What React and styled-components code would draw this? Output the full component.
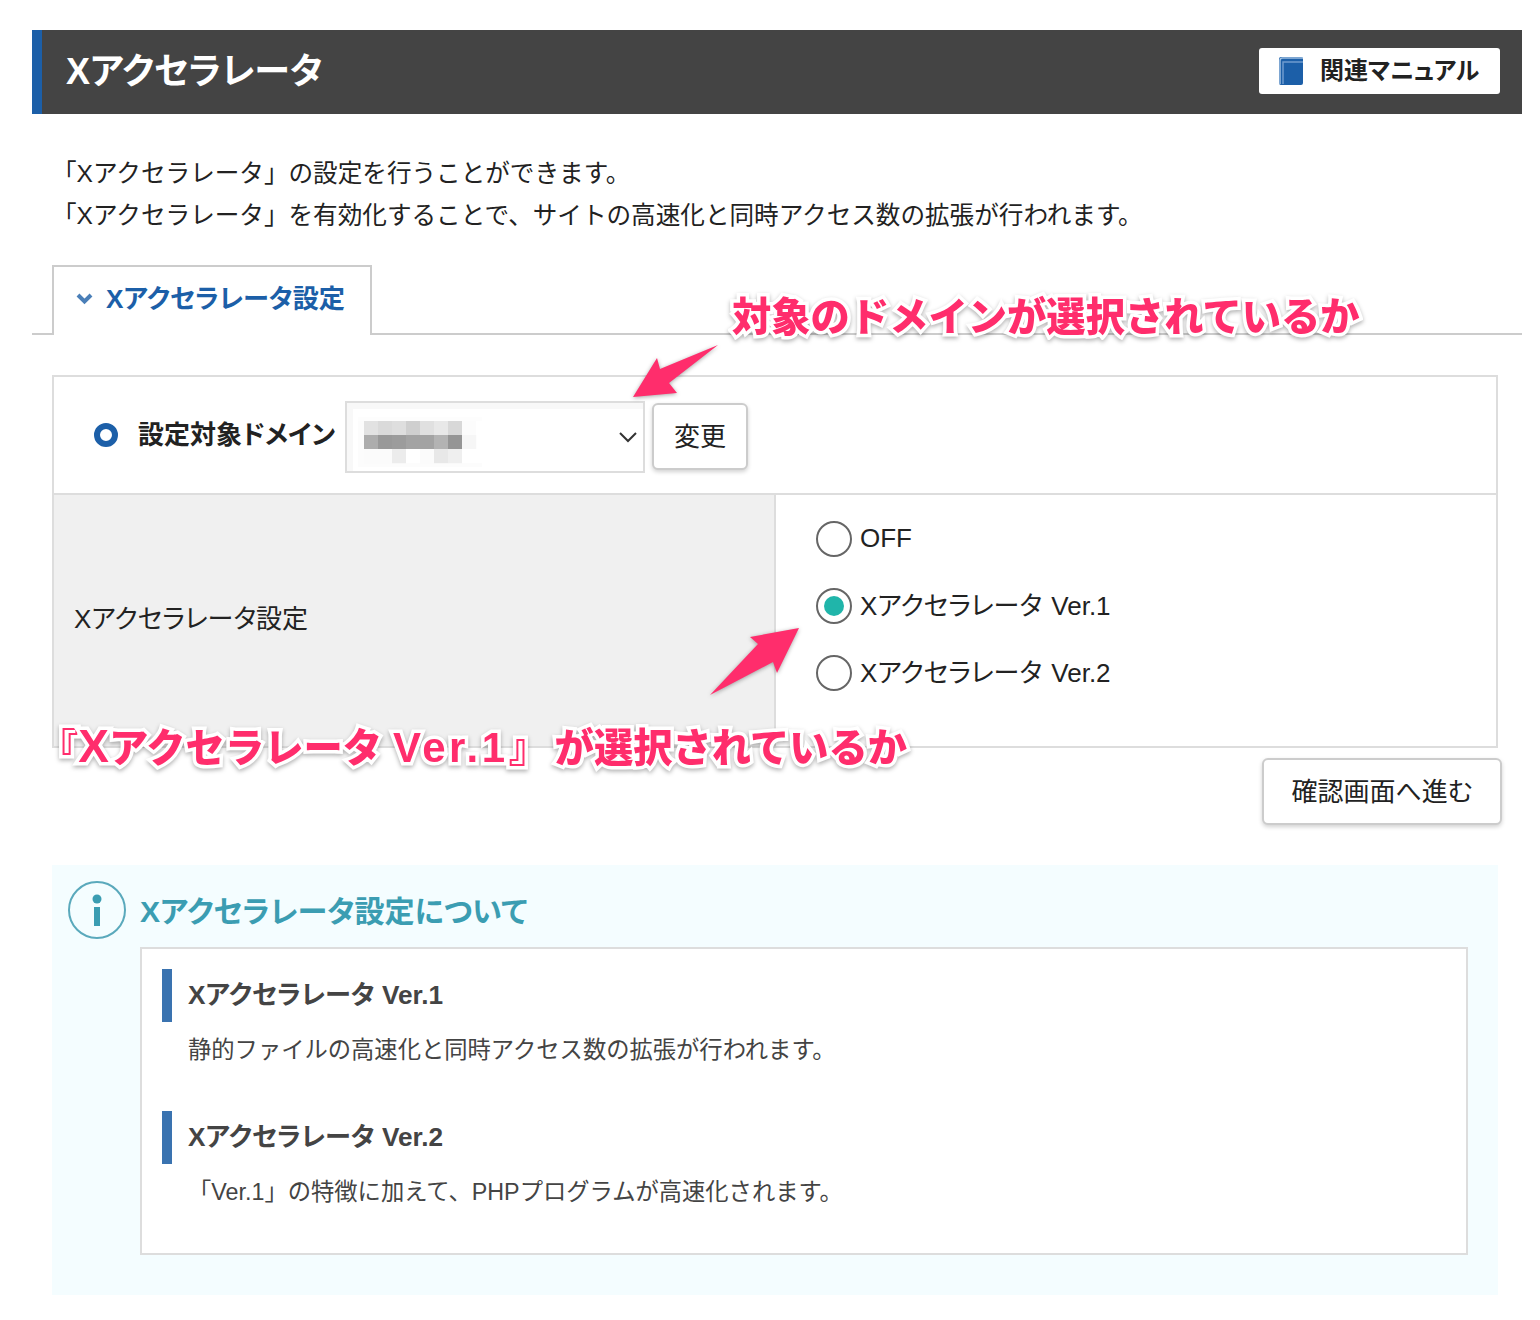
import React from "react";
import styled, { createGlobalStyle } from "styled-components";

const Global = createGlobalStyle`
  html, body { margin: 0; padding: 0; background: #fff; }
  body { font-family: "Liberation Sans", "Noto Sans CJK JP", sans-serif; color: #222; }
  * { box-sizing: border-box; }
`;

const Page = styled.div`
  position: relative;
  width: 1540px;
  height: 1320px;
  padding: 30px 18px 0 32px;
  overflow: hidden;
  font-feature-settings: "palt";
`;
const Header = styled.header`
  height: 84px;
  background: #444;
  border-left: 10px solid #1c5fa8;
  padding: 0 22px 0 24px;
  display: flex;
  align-items: center;
  justify-content: space-between;
`;
const Title = styled.h1`
  margin: 0 0 8px;
  font-size: 36px;
  font-weight: 700;
  color: #fff;
`;
const ManualButton = styled.a`
  width: 241px;
  height: 46px;
  margin-bottom: 2px;
  background: #fff;
  border-radius: 3px;
  display: flex;
  align-items: center;
  padding: 0 0 5px 20px;
  gap: 17px;
  font-size: 24px;
  font-weight: 700;
  color: #222;
  svg { margin-top: 5px; }
`;
const Intro = styled.p`
  margin: 39px 0 0;
  padding-left: 20px;
  font-size: 24.6px;
  line-height: 42px;
  color: #222;
  font-feature-settings: normal;
`;
const TabBar = styled.div`
  margin-top: 28px;
  height: 70px;
  border-bottom: 2px solid #ccc;
  padding-left: 20px;
`;
const Tab = styled.div`
  width: 320px;
  height: 70px;
  background: #fff;
  border: 2px solid #ccc;
  border-bottom: none;
  display: flex;
  align-items: center;
  padding: 0 0 8px 22px;
  gap: 13px;
  font-size: 26.2px;
  font-weight: 700;
  color: #1c5fa8;
  svg { margin-top: 3px; }
`;
const Content = styled.div`
  padding: 0 24px 0 20px;
`;
const Table = styled.section`
  margin-top: 40px;
  height: 373px;
  border: 2px solid #ddd;
  display: grid;
  grid-template-rows: 118px 1fr;
`;
const DomainRow = styled.div`
  border-bottom: 2px solid #ddd;
  display: flex;
  align-items: center;
  padding-left: 40px;
`;
const Ring = styled.span`
  width: 24px;
  height: 24px;
  border-radius: 50%;
  border: 6px solid #1c5fa8;
  margin: 0 20px 0 0;
`;
const DomainLabel = styled.strong`
  font-size: 26px;
  font-weight: 700;
  width: 207px;
  padding-bottom: 5px;
  color: #222;
`;
const DomainSelect = styled.div`
  width: 300px;
  height: 72px;
  border: 2px solid #ddd;
  box-shadow: inset 6px 6px 0 #f8f8f8;
  padding: 0 5px 0 11px;
  margin-top: 3px;
  display: flex;
  align-items: center;
  justify-content: space-between;
`;
const ActionButton = styled.button`
  height: ${(p) => p.$h}px;
  width: ${(p) => p.$w}px;
  background: #fff;
  border: 2px solid #ccc;
  border-radius: 6px;
  box-shadow: 0 2px 4px rgba(0, 0, 0, 0.18);
  font-family: inherit;
  font-feature-settings: "palt";
  font-size: 26px;
  color: #222;
  padding: 0 0 4px;
`;
const ChangeSlot = styled.div`
  margin: 2px 0 0 7px;
`;
const SettingRow = styled.div`
  display: grid;
  grid-template-columns: 722px 1fr;
`;
const SettingLabel = styled.div`
  background: #f0f0f0;
  border-right: 2px solid #ddd;
  display: flex;
  align-items: center;
  padding: 0 0 8px 20px;
  font-size: 26px;
  color: #222;
`;
const Radios = styled.div`
  padding: 26px 0 0 40px;
  display: flex;
  flex-direction: column;
  gap: 31.2px;
`;
const RadioRow = styled.label`
  display: flex;
  align-items: center;
  gap: 8px;
  height: 36px;
  font-size: 26px;
  word-spacing: 2px;
  color: #222;
`;
const RadioText = styled.span`
  margin-top: ${(p) => (p.$latin ? "-1px" : "-5px")};
`;
const RadioCircle = styled.span`
  width: 36px;
  height: 36px;
  border-radius: 50%;
  border: 2px solid #666;
  background: #fff;
  display: flex;
  align-items: center;
  justify-content: center;
  &::after {
    content: "";
    width: 20px;
    height: 20px;
    border-radius: 50%;
    background: ${(p) => (p.$on ? "#20b5aa" : "transparent")};
  }
`;
const ActionRow = styled.div`
  display: flex;
  justify-content: flex-end;
  margin: 10px -4px 0 0;
`;
const InfoBox = styled.section`
  margin-top: 40px;
  height: 430px;
  background: #f4fdff;
  padding: 16px 30px 0 16px;
`;
const InfoHead = styled.div`
  display: flex;
  align-items: center;
  gap: 14px;
  height: 58px;
`;
const InfoTitle = styled.h2`
  margin: 0 0 2px;
  font-size: 30.1px;
  font-weight: 700;
  color: #3b9db2;
`;
const InfoInner = styled.div`
  margin: 8px 0 0 72px;
  height: 308px;
  background: #fff;
  border: 2px solid #ddd;
  padding: 20px 20px 0;
`;
const Entry = styled.div`
  margin-bottom: 40px;
`;
const EntryTitle = styled.h3`
  margin: 0;
  height: 53px;
  border-left: 10px solid #3a73b0;
  padding: 0 0 6px 16px;
  display: flex;
  align-items: center;
  font-size: 26.2px;
  font-weight: 700;
  color: #444;
`;
const EntryText = styled.p`
  margin: 7px 0 0 26px;
  font-size: 23.3px;
  line-height: 42px;
  color: #444;
  font-feature-settings: normal;
`;
const Note = styled.div`
  position: absolute;
  left: ${(p) => p.$x}px;
  top: ${(p) => p.$y}px;
  font-size: 39.3px;
  font-weight: 900;
  white-space: pre;
  color: #ff2d6c;
  font-feature-settings: normal;
  -webkit-text-stroke: 7px #fff;
  paint-order: stroke fill;
  filter: drop-shadow(0 2px 2px rgba(0, 0, 0, 0.3));
`;
const NoteLatin = styled.span`
  letter-spacing: ${(p) => p.$track}px;
  font-size: ${(p) => p.$size}px;
`;
const ArrowLayer = styled.svg`
  position: absolute;
  left: 0;
  top: 0;
  pointer-events: none;
`;
const MosaicArt = styled.svg`
  display: block;
  margin-top: 11px;
`;

const mosaic = [
  ["#e2e2e2", "#dadada", "#dedede", "#cfcfcf", "#e0e0e0", "#e8e8e8", "#d8d8d8", "#fcfcfc"],
  ["#adadad", "#999999", "#9c9c9c", "#a3a3a3", "#a3a3a3", "#b3b3b3", "#959595", "#f6f6f6"],
  ["#fbfbfb", "#fbfbfb", "#ececec", "#ffffff", "#fbfbfb", "#e8e8e8", "#efefef", "#ffffff"],
];

const Mosaic = () => (
  <MosaicArt width="124" height="50" viewBox="0 0 124 50">
    <rect x="0" y="0" width="124" height="4" fill="#fdfdfd" />
    <rect x="0" y="4" width="6" height="46" fill="#fcfcfc" />
    <rect x="6" y="46" width="118" height="4" fill="#fcfcfc" />
    {mosaic.map((row, r) =>
      row.map((c, i) => <rect key={`${r}-${i}`} x={6 + i * 14} y={4 + r * 14} width="14.2" height="14.2" fill={c} />)
    )}
  </MosaicArt>
);

const Book = () => (
  <svg width="24" height="28" viewBox="0 0 24 28">
    <rect width="24" height="28" rx="2" fill="#1c5fa8" />
    <path d="M1 27V3.5C1 2 2 1 3.5 1H24" fill="none" stroke="#9dbfe0" strokeWidth="1.5" />
    <path d="M4 27V5H24" fill="none" stroke="#6f9cce" strokeWidth="1.5" />
  </svg>
);

const Chevron = () => (
  <svg width="17" height="12" viewBox="0 0 17 12">
    <path d="M2 2l6.5 6.5L15 2" fill="none" stroke="#4a7fb8" strokeWidth="4" />
  </svg>
);

const SelectCaret = () => (
  <svg width="20" height="12" viewBox="0 0 20 12">
    <path d="M2 2l8 8 8-8" fill="none" stroke="#333" strokeWidth="2" />
  </svg>
);

const InfoIcon = () => (
  <svg width="58" height="58" viewBox="0 0 58 58">
    <circle cx="29" cy="29" r="28" fill="none" stroke="#5aa9bc" strokeWidth="2" />
    <circle cx="29" cy="18" r="4.5" fill="#3b9db2" />
    <rect x="26" y="26" width="6" height="19" fill="#3b9db2" />
  </svg>
);

export default function App() {
  return (
    <Page>
      <Global />
      <Header>
        <Title>Xアクセラレータ</Title>
        <ManualButton>
          <Book />
          関連マニュアル
        </ManualButton>
      </Header>
      <Intro>
        「Xアクセラレータ」の設定を行うことができます。
        <br />
        「Xアクセラレータ」を有効化することで、サイトの高速化と同時アクセス数の拡張が行われます。
      </Intro>
      <TabBar>
        <Tab>
          <Chevron />
          Xアクセラレータ設定
        </Tab>
      </TabBar>
      <Content>
        <Table>
          <DomainRow>
            <Ring />
            <DomainLabel>設定対象ドメイン</DomainLabel>
            <DomainSelect>
              <Mosaic />
              <SelectCaret />
            </DomainSelect>
            <ChangeSlot>
              <ActionButton $w={96} $h={67}>変更</ActionButton>
            </ChangeSlot>
          </DomainRow>
          <SettingRow>
            <SettingLabel>Xアクセラレータ設定</SettingLabel>
            <Radios>
              <RadioRow><RadioCircle /><RadioText $latin>OFF</RadioText></RadioRow>
              <RadioRow><RadioCircle $on /><RadioText>Xアクセラレータ Ver.1</RadioText></RadioRow>
              <RadioRow><RadioCircle /><RadioText>Xアクセラレータ Ver.2</RadioText></RadioRow>
            </Radios>
          </SettingRow>
        </Table>
        <ActionRow>
          <ActionButton $w={240} $h={67}>確認画面へ進む</ActionButton>
        </ActionRow>
        <InfoBox>
          <InfoHead>
            <InfoIcon />
            <InfoTitle>Xアクセラレータ設定について</InfoTitle>
          </InfoHead>
          <InfoInner>
            <Entry>
              <EntryTitle>Xアクセラレータ Ver.1</EntryTitle>
              <EntryText>静的ファイルの高速化と同時アクセス数の拡張が行われます。</EntryText>
            </Entry>
            <Entry>
              <EntryTitle>Xアクセラレータ Ver.2</EntryTitle>
              <EntryText>「Ver.1」の特徴に加えて、PHPプログラムが高速化されます。</EntryText>
            </Entry>
          </InfoInner>
        </InfoBox>
      </Content>
      <Note $x={732} $y={285}>対象のドメインが選択されているか</Note>
      <Note $x={39} $y={716}>『<NoteLatin $size={46} $track={0}>X</NoteLatin>アクセラレータ <NoteLatin $size={42} $track={3.5}>Ver.1</NoteLatin>』<NoteLatin $size={24} $track={0}> </NoteLatin>が選択されているか</Note>
      <ArrowLayer width="1540" height="1320" viewBox="0 0 1540 1320">
        <g fill="#ff2d6c" style={{ filter: "drop-shadow(0 1px 2px rgba(0,0,0,.35))" }}>
          <path d="M633 397L657 358L660 369L718 345L669 383L677 393Z" />
          <path d="M799 628L750 637L758 644L710 695L773 662L777 673Z" />
        </g>
      </ArrowLayer>
    </Page>
  );
}
